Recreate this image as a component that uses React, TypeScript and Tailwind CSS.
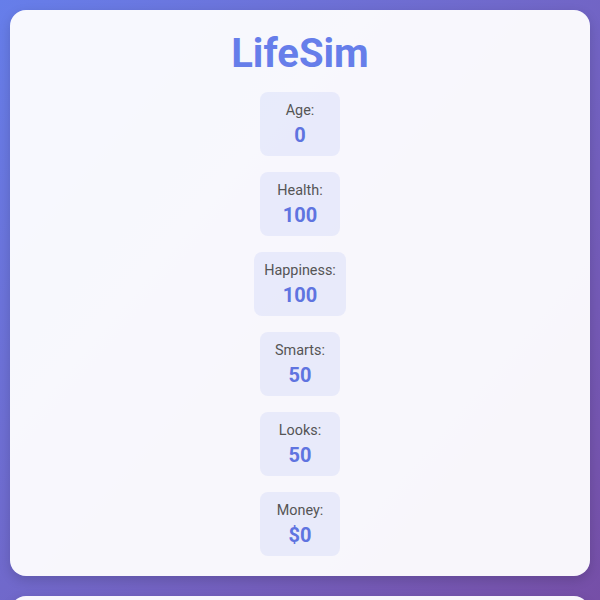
import React from 'react';

const stats = [
  { label: 'Age:', value: '0' },
  { label: 'Health:', value: '100' },
  { label: 'Happiness:', value: '100' },
  { label: 'Smarts:', value: '50' },
  { label: 'Looks:', value: '50' },
  { label: 'Money:', value: '$0' },
];

export default function App() {
  return (
    <div
      className="min-h-screen bg-gradient-to-br from-[#667eea] to-[#764ba2] p-[10px] flex flex-col gap-5"
      style={{ fontFamily: 'Roboto, "Noto Sans", sans-serif' }}
    >
      {/* Header card with character stats */}
      <div className="bg-white/95 rounded-2xl p-5 shadow-[0_4px_12px_rgba(0,0,0,0.15)]">
        <h1 className="text-center text-[40px] leading-[1.2] font-bold text-[#667eea] mb-[14px]">LifeSim</h1>
        <div className="flex flex-col items-center gap-4">
          {stats.map((s) => (
            <div
              key={s.label}
              className="min-w-[80px] px-[10px] py-[10px] rounded-lg bg-[#667eea]/10 flex flex-col items-center"
            >
              <span className="text-[14.4px] leading-[18px] text-[#555]">{s.label}</span>
              <span className="mt-1 text-xl leading-[22px] font-bold text-[#5f74e0]">{s.value}</span>
            </div>
          ))}
        </div>
      </div>

      {/* Event log card */}
      <div className="bg-white/95 rounded-2xl p-5 shadow-[0_4px_12px_rgba(0,0,0,0.15)]">
        <h2 className="text-xl font-bold text-[#333]">Life Events</h2>
        <p className="text-sm text-[#555] mt-2">You were born.</p>
      </div>
    </div>
  );
}
